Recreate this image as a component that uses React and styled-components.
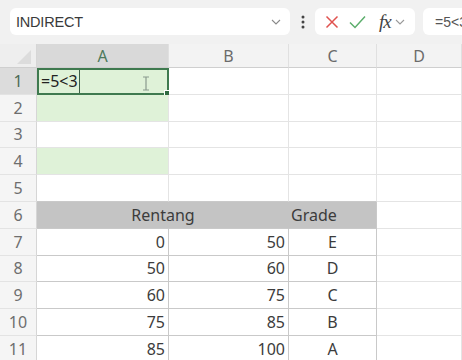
import React from "react";
import styled, { createGlobalStyle } from "styled-components";

const Global = createGlobalStyle`
  html, body { margin: 0; padding: 0; overflow: hidden; background: #ffffff; }
  body { font-family: "Inter", "Noto Sans", sans-serif; }
`;

const Page = styled.div`
  width: 462px;
  height: 360px;
  overflow: hidden;
  display: flex;
  flex-direction: column;
`;

const TopBar = styled.div`
  height: 44px;
  flex: none;
  background: #f1f1f1;
  display: flex;
  align-items: flex-start;
  padding: 8px 0 0 10px;
  box-sizing: border-box;
  gap: 0;
  overflow: hidden;
`;

const Box = styled.div`
  height: 27px;
  background: #ffffff;
  border-radius: 6px;
  box-sizing: border-box;
  display: flex;
  align-items: center;
  flex: none;
  width: ${(p) => p.$w}px;
  margin-left: ${(p) => p.$ml || 0}px;
  padding-left: ${(p) => p.$pl || 0}px;
  overflow: hidden;
`;

const NameText = styled.span`
  font-family: "Liberation Sans", Arial, sans-serif;
  font-size: 14.5px;
  color: #3a3a3a;
  flex: 1;
  letter-spacing: -0.2px;
`;

const FormulaText = styled.span`
  font-family: "Liberation Sans", Arial, sans-serif;
  font-size: 14px;
  color: #555;
  white-space: nowrap;
`;

const Fx = styled.span`
  font-family: "Liberation Serif", "Times New Roman", serif;
  font-style: italic;
  font-size: 19px;
  color: #444;
  margin-left: 13px;
  letter-spacing: -1px;
`;

const Dots = styled.div`
  width: 25px;
  flex: none;
  display: flex;
  justify-content: center;
  align-items: center;
  height: 27px;
`;

const Chevron = ({ color = "#8a8a8a", mr = 0, ml = 0 }) => (
  <svg width="10" height="6" viewBox="0 0 10 6" style={{ marginRight: mr, marginLeft: ml, flex: "none" }}>
    <path d="M1 1 L5 5 L9 1" fill="none" stroke={color} strokeWidth="1.1" />
  </svg>
);

const Grid = styled.div`
  display: grid;
  grid-template-columns: 37px 132px 120px 88px 1fr;
  grid-template-rows: 24px repeat(11, 26.8px);
  flex: none;
`;

const Corner = styled.div`
  background: #eeeeee;
  border-right: 1px solid #d6d6d6;
  border-bottom: 1px solid #cfcfcf;
  position: relative;
  overflow: hidden;
`;

const ColHead = styled.div`
  background: ${(p) => (p.$sel ? "#d9d9d9" : "#f3f3f3")};
  color: ${(p) => (p.$sel ? "#4d7a5c" : "#6b6b6b")};
  border-right: 1px solid #e0e0e0;
  border-bottom: 1px solid #cfcfcf;
  display: flex;
  align-items: center;
  justify-content: center;
  font-family: "Noto Sans", sans-serif;
  font-size: 16px;
`;

const RowHead = styled.div`
  background: ${(p) => (p.$sel ? "#dcdcdc" : "#f5f5f5")};
  color: ${(p) => (p.$sel ? "#4d6b58" : "#6e6e6e")};
  border-right: 1px solid #d6d6d6;
  border-bottom: 1px solid #e3e3e3;
  display: flex;
  align-items: center;
  justify-content: center;
  font-family: "Noto Sans", sans-serif;
  font-size: 16px;
`;

const Cell = styled.div`
  background: ${(p) => p.$bg || "#ffffff"};
  border-right: 1px solid ${(p) => p.$br || "#e4e4e4"};
  border-bottom: 1px solid ${(p) => p.$bb || "#e4e4e4"};
  display: flex;
  align-items: center;
  justify-content: ${(p) => p.$justify || "flex-start"};
  padding: 0 ${(p) => p.$pr || 3}px 0 ${(p) => p.$pl || 3}px;
  font-family: "Noto Sans", sans-serif;
  font-size: 16px;
  color: #3c3c3c;
  grid-column: ${(p) => p.$span || "auto"};
  position: relative;
  min-width: 0;
`;

const ActiveCell = styled(Cell)`
  outline: 2px solid #3f7a4f;
  outline-offset: -2px;
  padding-left: 4px;
  color: #222;
`;

const Caret = styled.span`
  align-self: stretch;
  width: 1px;
  background: #3d5f47;
  margin-left: 1px;
`;

const FillHandle = styled.span`
  position: absolute;
  right: -3px;
  bottom: -3px;
  width: 5px;
  height: 5px;
  background: #2f6a40;
  border: 1px solid #fff;
`;

const Beam = styled.svg`
  position: absolute;
  left: 105px;
  top: 8px;
`;

const GREEN = "#dff2d8";
const HEAD_GRAY = "#c4c4c4";
const TBL = "#c9c9c9";

const table = [
  ["0", "50", "E"],
  ["50", "60", "D"],
  ["60", "75", "C"],
  ["75", "85", "B"],
  ["85", "100", "A"],
];

export default function App() {
  return (
    <Page>
      <Global />
      <TopBar>
        <Box $w={280} $pl={6}>
          <NameText>INDIRECT</NameText>
          <Chevron mr={9} />
        </Box>
        <Dots>
          <svg width="4" height="14" viewBox="0 0 4 14">
            <circle cx="2" cy="2" r="1.5" fill="#444" />
            <circle cx="2" cy="7" r="1.5" fill="#444" />
            <circle cx="2" cy="12" r="1.5" fill="#444" />
          </svg>
        </Dots>
        <Box $w={100} $pl={10}>
          <svg width="14" height="14" viewBox="0 0 14 14" style={{ flex: "none" }}>
            <path d="M1.5 1.5 L12.5 12.5 M12.5 1.5 L1.5 12.5" stroke="#e0524f" strokeWidth="1.5" fill="none" />
          </svg>
          <svg width="17" height="14" viewBox="0 0 17 14" style={{ flex: "none", marginLeft: 10 }}>
            <path d="M1 7.5 L6 12.5 L16 1.5" stroke="#5cae6c" strokeWidth="1.5" fill="none" />
          </svg>
          <Fx>fx</Fx>
          <Chevron ml={4} color="#9a9a9a" />
        </Box>
        <Box $w={90} $ml={8} $pl={12}>
          <FormulaText>=5&lt;3</FormulaText>
        </Box>
      </TopBar>
      <Grid>
        <Corner>
          <svg width="37" height="24" viewBox="0 0 37 24" style={{ position: "absolute", left: 0, top: 0 }}>
            <path d="M31 6 L31 20 L17 20 Z" fill="#dcdcdc" />
          </svg>
        </Corner>
        <ColHead $sel>A</ColHead>
        <ColHead>B</ColHead>
        <ColHead>C</ColHead>
        <ColHead>D</ColHead>

        <RowHead $sel>1</RowHead>
        <ActiveCell $bg={GREEN}>
          =5&lt;3<Caret />
          <Beam width="8" height="15" viewBox="0 0 8 15">
            <path d="M1 1 H7 M4 1 V14 M1 14 H7" stroke="#8a9a8e" strokeWidth="1.2" fill="none" />
          </Beam>
          <FillHandle />
        </ActiveCell>
        <Cell />
        <Cell />
        <Cell />

        {[2, 3, 4, 5].map((r) => (
          <React.Fragment key={r}>
            <RowHead>{r}</RowHead>
            <Cell $bg={r === 2 || r === 4 ? GREEN : undefined} $bb={r === 5 ? TBL : undefined} />
            <Cell $bb={r === 5 ? TBL : undefined} />
            <Cell $bb={r === 5 ? TBL : undefined} />
            <Cell />
          </React.Fragment>
        ))}

        <RowHead>6</RowHead>
        <Cell $span="span 2" $bg={HEAD_GRAY} $br={HEAD_GRAY} $bb={TBL} $justify="center" $pl={4}>
          Rentang
        </Cell>
        <Cell $bg={HEAD_GRAY} $br={TBL} $bb={TBL} $pl={2}>
          Grade
        </Cell>
        <Cell />

        {table.map((row, i) => (
          <React.Fragment key={i}>
            <RowHead>{i + 7}</RowHead>
            <Cell $justify="flex-end" $br={TBL} $bb={TBL}>{row[0]}</Cell>
            <Cell $justify="flex-end" $br={TBL} $bb={TBL}>{row[1]}</Cell>
            <Cell $justify="center" $br={TBL} $bb={TBL}>{row[2]}</Cell>
            <Cell />
          </React.Fragment>
        ))}
      </Grid>
    </Page>
  );
}
